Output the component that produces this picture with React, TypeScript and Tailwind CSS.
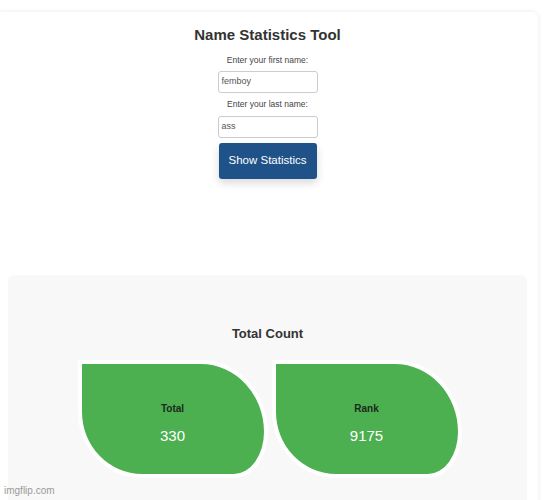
import React from "react";

function StatCard({ label, value }: { label: string; value: string }) {
  return (
    <div className="flex h-[118px] w-[190px] flex-col items-center border-4 border-white bg-[#4caf50] pt-[39px] rounded-[0_67px_34px_64px/0_72px_46px_66px]">
      <div className="text-[10px] font-bold leading-[12px] text-[#1b2a1b]">{label}</div>
      <div className="mt-[12px] text-[15px] leading-[17px] text-white">{value}</div>
    </div>
  );
}

export default function App() {
  return (
    <div
      className="relative h-[500px] w-[549px] overflow-hidden bg-white"
      style={{ fontFamily: '"Liberation Sans", Arial, sans-serif' }}
    >
      <div className="ml-[-3px] mt-[12px] flex h-[520px] w-[541px] flex-col items-center rounded-md bg-white px-[11px] shadow-[0_0_5px_rgba(0,0,0,0.09)]">
        <h1 className="mt-[14px] text-[15px] font-bold leading-[17px] text-[#333]">Name Statistics Tool</h1>
        <label className="mt-[12px] text-[8.5px] leading-[10px] text-[#444]">Enter your first name:</label>
        <div className="mt-[6px] flex h-[22px] w-[100px] items-center rounded-[3px] border border-[#ccc] bg-white px-[3px] text-[9px] text-[#555]">
          femboy
        </div>
        <label className="mt-[6px] text-[8.5px] leading-[10px] text-[#444]">Enter your last name:</label>
        <div className="mt-[7px] flex h-[22px] w-[100px] items-center rounded-[3px] border border-[#ccc] bg-white px-[3px] text-[9px] text-[#555]">
          ass
        </div>
        <button className="mt-[5px] h-[36px] w-[98px] rounded-[3px] bg-[#1f5288] text-[11.5px] text-white shadow-[0_4px_8px_rgba(0,0,0,0.15)]">
          Show Statistics
        </button>
        <div className="mt-[96px] flex w-full flex-1 flex-col items-center rounded-md bg-[#f8f8f8] pt-[51px]">
          <h2 className="text-[13px] font-bold leading-[16px] text-[#333]">Total Count</h2>
          <div className="ml-[4px] mt-[18px] flex gap-[4px]">
            <StatCard label="Total" value="330" />
            <StatCard label="Rank" value="9175" />
          </div>
        </div>
      </div>
      <div className="absolute bottom-[3px] left-[4px] text-[10px] leading-[12px] text-[#9a9a9a]">imgflip.com</div>
    </div>
  );
}
